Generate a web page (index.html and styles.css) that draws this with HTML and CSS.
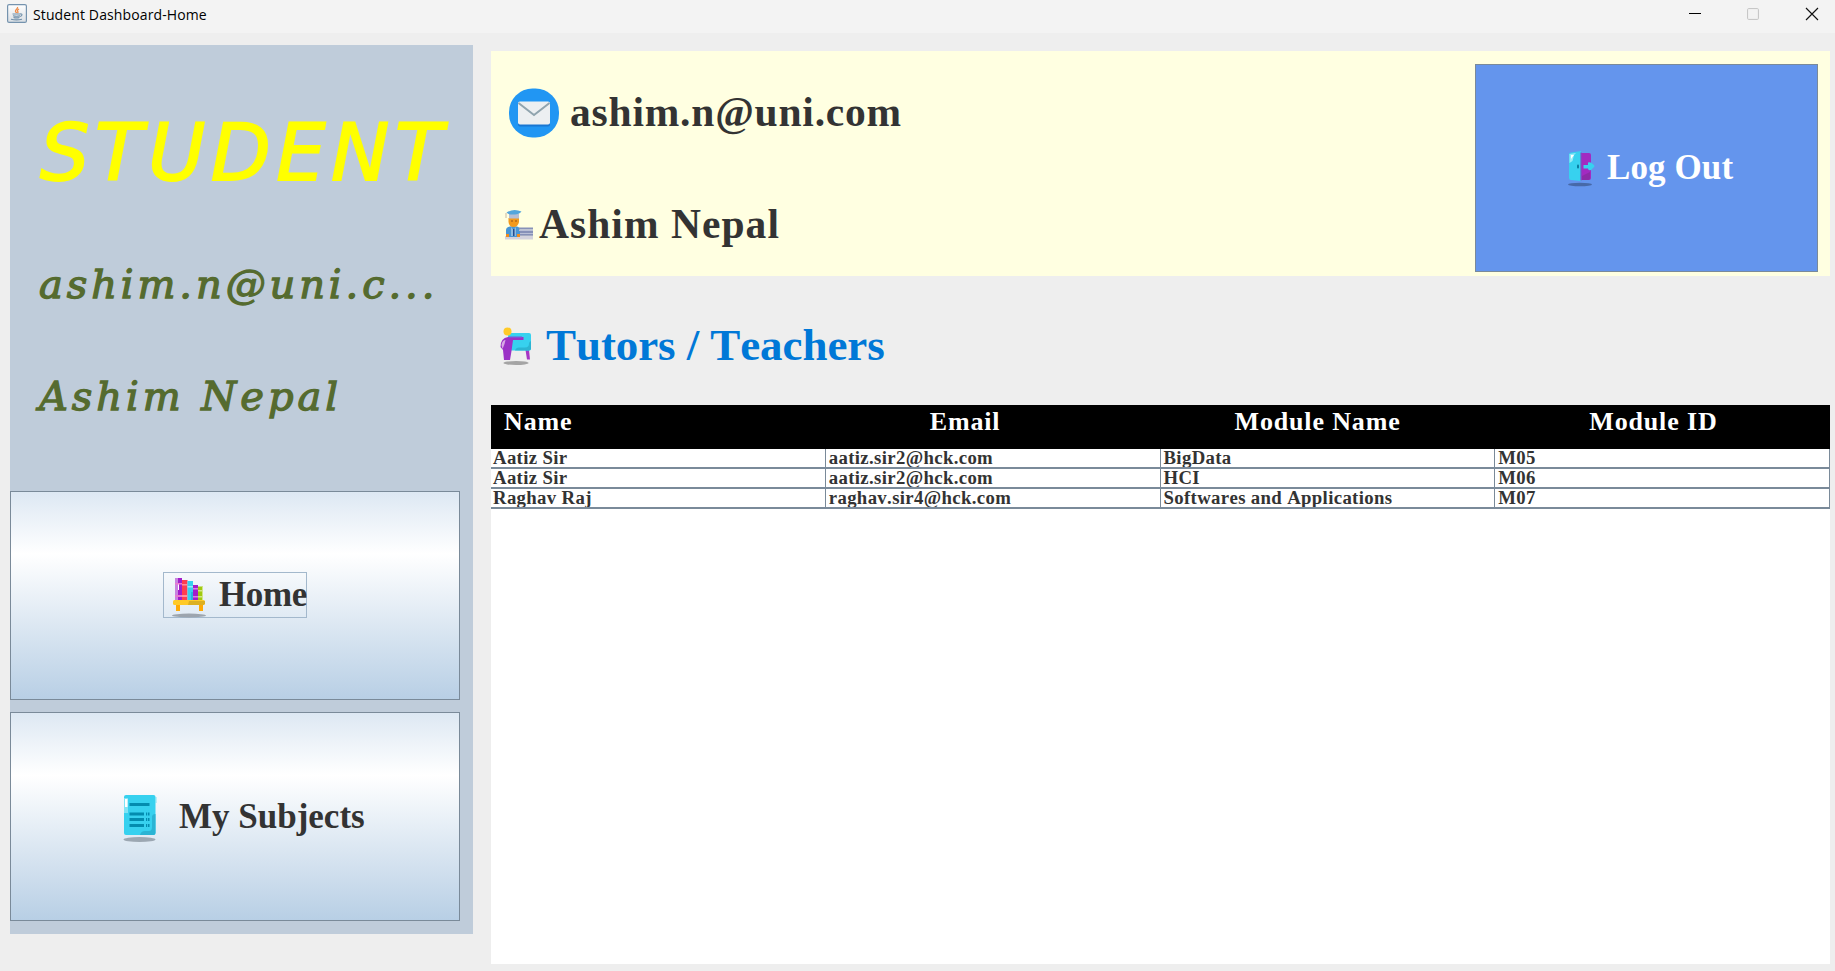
FILE: index.html
```html
<!DOCTYPE html>
<html lang="en">
<head>
<meta charset="utf-8">
<title>Student Dashboard-Home</title>
<link rel="stylesheet" href="styles.css">
</head>
<body>
<div class="titlebar">
  <svg class="java" width="20" height="19" viewBox="0 0 20 19">
    <defs><linearGradient id="jb" x1="0" y1="0" x2="0" y2="1"><stop offset="0" stop-color="#fff"/><stop offset="1" stop-color="#d9dee3"/></linearGradient></defs>
    <rect x=".6" y=".6" width="18.8" height="17.8" rx="1.5" fill="url(#jb)" stroke="#7593ae" stroke-width="1.2"/>
    <path d="M10.500 3c.8 1.800-2.500 2.600-2 4.300.2.900 1 1 1 1.700M12 5c-1.300.8-2 1.600-1.300 2.400s.3 1.200-.4 1.600" fill="none" stroke="#ee8b48" stroke-width="1.300"/>
    <path d="M5.500 10h7.500M6 11.700q3.500 1 7 0M6.500 13.400q3 1 6 0M4 15.200q5.500 1.300 11 0M13 10q2.600-.4 1.800 1.200-.5 1-2 1.300" fill="none" stroke="#7190aa" stroke-width="1.100"/>
  </svg>
  <span class="caption">Student Dashboard-Home</span>
  <svg class="winctl" width="130" height="14" viewBox="0 0 130 14">
    <path d="M0 6.500h12" stroke="#000" fill="none"/>
    <rect x="58.600" y="1.600" width="10.800" height="10.800" rx="1" stroke="#c3c3c3" fill="none"/>
    <path d="M117 1l12 12M129 1l-12 12" stroke="#111" stroke-width="1.150" fill="none"/>
  </svg>
</div>
<div class="content">
  <aside class="sidebar">
    <div class="brand">STUDENT</div>
    <div class="who mail">ashim.n@uni.c...</div>
    <div class="who name">Ashim Nepal</div>
    <button class="nav home">
      <span class="focus">
        <svg width="36" height="40" viewBox="0 0 36 40">
          <ellipse cx="18" cy="37.500" rx="17" ry="1.900" fill="#9da5ae"/>
          <rect x="4" y="0" width="7" height="22" fill="#a31dcb"/><path d="M4 0h3v22H4z" fill="#c884df"/><path d="M7 6h1v6H7z" fill="#fff"/>
          <path d="M4 5h7v1.500H4zM4 17h7v2H4z" fill="#e978cf"/>
          <rect x="11" y="2" width="5.500" height="20" fill="#ff3d50"/><path d="M11 6h5.500v1.500H11zM11 17h5.500v2H11z" fill="#ff8f9d"/>
          <rect x="16.500" y="3" width="5.500" height="19" fill="#37d1ef"/><path d="M16.500 8H22v1.500h-5.500z" fill="#9aeaf6"/><path d="M20 14h2v8h-2z" fill="#26b4dd"/>
          <rect x="22" y="7" width="5" height="15" fill="#a31dcb"/><path d="M22 10h5v1.500h-5zM22 18h5v1.500h-5z" fill="#da83e0"/>
          <rect x="27" y="8.500" width="5" height="13.500" fill="#a0ca10"/><path d="M27 12h5v1.500h-5zM27 18h5v1.500h-5zM31 8.500h1V22h-1z" fill="#d1e588"/>
          <path d="M5 26h4v7H5zM28 26h4v7h-4z" fill="#ffaa05"/>
          <rect x="2" y="22" width="32" height="5" rx="1.500" fill="#ffca28"/><path d="M18 23h16v2.500L32.500 27H17z" fill="#dcb023"/>
        </svg>
        <span class="home-text">Home</span>
      </span>
    </button>
    <button class="nav subjects">
      <svg width="34" height="47" viewBox="0 0 34 47">
        <ellipse cx="16.500" cy="44.500" rx="16" ry="2.500" fill="#9ca7b2"/>
        <rect x="1" y="0" width="31.500" height="40" rx="2" fill="#37d1ef"/>
        <path d="M32 2h1.500v6H32zM1 3h4v15H1z" fill="#80e4f5"/><path d="M2 4h2.500v8H2z" fill="#fff"/>
        <path d="M32.500 19v19q0 2-2 2H17q1-4 5-4h4q3 0 3-4V22q0-3 3.500-3z" fill="#2bb4d4"/>
        <path d="M6.500 9.500h20M6.500 19H21M6.500 24.500H21M6.500 30.500H21M23 19h3.500M23 24.500h3.500M23 30.500h3.500" stroke="#038caf" stroke-width="2.800" fill="none"/>
        <path d="M24.500 17v15" stroke="#37d1ef" stroke-width=".8"/>
      </svg>
      <span>My Subjects</span>
    </button>
  </aside>
  <main class="main">
    <header class="banner">
      <div class="ident">
        <div class="row1">
          <svg width="50" height="50" viewBox="0 0 50 50">
            <rect x="0" y=".5" width="50" height="49" rx="23.500" ry="23.500" fill="#2196f3"/>
            <rect x="9" y="15" width="32" height="23.500" rx="2" fill="#1976d2"/>
            <rect x="9" y="13.500" width="32" height="23" rx="2" fill="#eceff1"/>
            <path d="M9.500 15L25 27 40.500 15" fill="none" stroke="#90a4ae" stroke-width="2"/>
          </svg>
          <span>ashim.n@uni.com</span>
        </div>
        <div class="row2">
          <svg width="28" height="31" viewBox="0 0 28 31">
            <path d="M0 27h28v3.500H0z" fill="#d3d2dc"/>
            <path d="M1 27v-6q0-3 4-3.500l3-.5 4 .5q3 .5 3 4V28H1z" fill="#4795d5"/>
            <path d="M6 18l2.500 3 2.500-3v9H6z" fill="#8dbbe0"/><path d="M8 20h1.500v7H8z" fill="#244c90"/>
            <path d="M14 18.500h14v2H14zM15 22h13v2H15zM15 25h13v1.700H15z" fill="#8791b8"/>
            <path d="M14 20.500h14v1.500H14zM15 24h13v1H15z" fill="#b9bfd6"/>
            <path d="M3.500 9h10.500v4q-1 5-5.500 5T3.500 13z" fill="#f39a1d"/>
            <path d="M4 5h10v4.500H4z" fill="#b6bfd4"/><path d="M1.500 3.500Q8.500-1 16.500 2.500 14 6 8.500 5.500 4 6 1.500 3.500z" fill="#54a6dc"/>
            <path d="M1 4v5" stroke="#c9b7a3"/><path d="M6 12h2M10 12h2" stroke="#965319"/>
            <path d="M1 25h3v3H1zM12 25h3v3h-3z" fill="#ef8b1e"/>
          </svg>
          <span>Ashim Nepal</span>
        </div>
      </div>
      <button class="logout">
        <svg width="28" height="37" viewBox="0 0 28 37">
          <ellipse cx="12" cy="34.500" rx="12" ry="1.800" fill="#4769a8"/>
          <path d="M13 3h8q2 0 2 2v23q0 2-2 2h-8z" fill="#a22ac1"/><path d="M14 26l8-4v6q0 2-2 2h-6z" fill="#8d2aa7"/>
          <path d="M1 4q0-1.500 2-1.500L13 1v30L3 30q-2 0-2-2z" fill="#37d1ef"/>
          <path d="M1.500 4L8 3 6 5 4.500 11l-3 2z" fill="#94eaf7"/><path d="M3 5h3L3 9z" fill="#fff"/>
          <path d="M13 2.500v28" stroke="#7354c5" stroke-width="1.200"/>
          <rect x="9" y="14.500" width="2" height="4" rx="1" fill="#087da0"/>
          <path d="M15.500 15H20v-2.500q2-1 4 1l2 1.500q1 1.500 0 2l-3 3q-3 .8-3-1.500H15.500z" fill="#37d1ef"/>
        </svg>
        <span>Log Out</span>
      </button>
    </header>
    <h1 class="heading">
      <svg width="32" height="39" viewBox="0 0 32 39">
        <ellipse cx="16" cy="36" rx="12.500" ry="2" fill="#a4a4a4"/>
        <path d="M25.500 23h3.500l1 9.500h-3z" fill="#a536c5"/>
        <rect x="8" y="6" width="23" height="17.500" rx="2" fill="#37d1ef"/><path d="M31 14v7.500q0 2-2 2H15q1-3 4-3h6q4 0 4-4 0-2 2-2.500z" fill="#2cb5d3"/>
        <path d="M8 10h15.500v3H13L11.500 24 10 33H4l-1-10-2.500-3q0-9 7.500-10z" fill="#9b32c6"/>
        <path d="M1.500 18q1-5 4-5l-1 4-2 5z" fill="#d9a9e6"/><path d="M9 10h13" stroke="#6e69df" stroke-width="1.200"/>
        <circle cx="7.500" cy="4.500" r="4" fill="#ffca28"/>
      </svg>
      <span>Tutors / Teachers</span>
    </h1>
    <div class="tablewrap">
      <table>
        <thead><tr><th class="c1">Name</th><th class="c2">Email</th><th class="c3">Module Name</th><th class="c4">Module ID</th></tr></thead>
        <tbody>
          <tr><td>Aatiz Sir</td><td>aatiz.sir2@hck.com</td><td>BigData</td><td>M05</td></tr>
          <tr><td>Aatiz Sir</td><td>aatiz.sir2@hck.com</td><td>HCI</td><td>M06</td></tr>
          <tr><td>Raghav Raj</td><td>raghav.sir4@hck.com</td><td>Softwares and Applications</td><td>M07</td></tr>
        </tbody>
      </table>
    </div>
  </main>
</div>
</body>
</html>
```
FILE: styles.css
```css
* { box-sizing: border-box; }
html, body { margin: 0; height: 100%; overflow: hidden; }
body {
  display: flex; flex-direction: column; height: 971px;
  background: #eee; color: #333;
  font-family: "Times New Roman", "Liberation Serif", serif;
  font-kerning: none; font-variant-ligatures: none;
}
svg { display: block; flex: none; }
span { white-space: nowrap; }
button { font: inherit; color: inherit; margin: 0; padding: 0; border-radius: 0; letter-spacing: inherit; font-kerning: none; }

.titlebar { display: flex; height: 33px; flex: none; background: #f3f3f3; padding: 4px 16px 0 7px; }
.caption { margin-left: 6px; font: 14px/22px "Segoe UI", "Open Sans", sans-serif; letter-spacing: .12px; color: #000; }
.winctl { margin: 3px 0 0 auto; }

.content { display: flex; flex: 1; min-height: 0; align-items: flex-start; padding: 0 5px 0 10px; gap: 18px; }

.sidebar { display: flex; flex-direction: column; width: 463px; height: 889px; margin-top: 12px; padding-top: 33px; background: #bfccda; flex: none; }
.brand { height: 150px; line-height: 150px; padding-left: 30px; white-space: nowrap; font-family: "Lucida Handwriting", "DejaVu Sans", sans-serif; font-style: italic; font-size: 78px; letter-spacing: 5.500px; color: #ff0; -webkit-text-stroke: 1.800px #ff0; }
.who { height: 112px; line-height: 112px; padding-left: 29px; white-space: nowrap; font-family: "Lucida Handwriting", "DejaVu Serif", serif; font-style: italic; font-size: 40px; color: #556b2f; -webkit-text-stroke: 1.300px #556b2f; }
.mail { letter-spacing: 3.900px; }
.name { letter-spacing: 3.950px; }
.nav { display: flex; align-items: center; width: 450px; height: 209px; border: 1px solid #7a8a99; background: linear-gradient(#dde8f3 0%, #fff 30%, #b8cfe5 100%); font-size: 35px; font-weight: bold; line-height: 40px; }
.home { margin-top: 39px; padding-left: 152px; }
.focus { display: flex; width: 144px; height: 46px; border: 1px solid #a3b8cc; padding: 5px 0 0 7px; margin-top: -1px; }
.home-text { margin: -3px 0 0 12px; letter-spacing: -.4px; }
.subjects { margin-top: 12px; padding-left: 112px; }
.subjects svg { margin-top: 4px; }
.subjects span { margin-left: 22px; }

.main { flex: 1; min-width: 0; margin-top: 18px; }
.banner { display: flex; justify-content: space-between; height: 225px; padding: 5px 12px 0 14px; background: #ffffe1; font-weight: bold; }
.ident { font-size: 41.500px; letter-spacing: .8px; }
.row1, .row2 { display: flex; align-items: center; height: 113px; }
.row1 { padding-left: 4px; }
.row1 span { margin: -2px 0 0 11px; }
.row2 { height: 111px; }
.row2 span { margin: -2px 0 0 6px; letter-spacing: 1.050px; }
.logout { display: flex; align-items: center; width: 343px; height: 208px; margin-top: 8px; padding-left: 92px; border: 1px solid #7a8a99; background: #6495ed; color: #fff; font-size: 35px; font-weight: bold; }
.logout span { margin: 0 0 0 11px; letter-spacing: .1px; }

.heading { display: flex; align-items: center; height: 129px; margin: 0; padding: 9px 0 0 9px; color: #0078d7; font-size: 45px; letter-spacing: -.08px; }
.heading svg { margin-top: 3px; }
.heading span { margin-left: 14px; }

.tablewrap { height: 559px; background: #fff; }
table { width: 100%; table-layout: fixed; border-collapse: separate; border-spacing: 0; }
th { height: 44px; padding: 0; background: #000; color: #fff; text-align: left; vertical-align: top; font-size: 26px; line-height: 33px; letter-spacing: .85px; }
.c1 { padding-left: 13px; }
.c2 { padding-left: 104px; }
.c3 { padding-left: 74px; }
.c4 { padding-left: 94px; }
td { height: 20px; padding: 0 0 1px 3px; border: solid #7a8a99; border-width: 0 1px 2px 0; font-size: 18.750px; font-weight: bold; line-height: 17px; letter-spacing: .35px; white-space: nowrap; overflow: hidden; }
td:first-child { padding-left: 2px; }
```
